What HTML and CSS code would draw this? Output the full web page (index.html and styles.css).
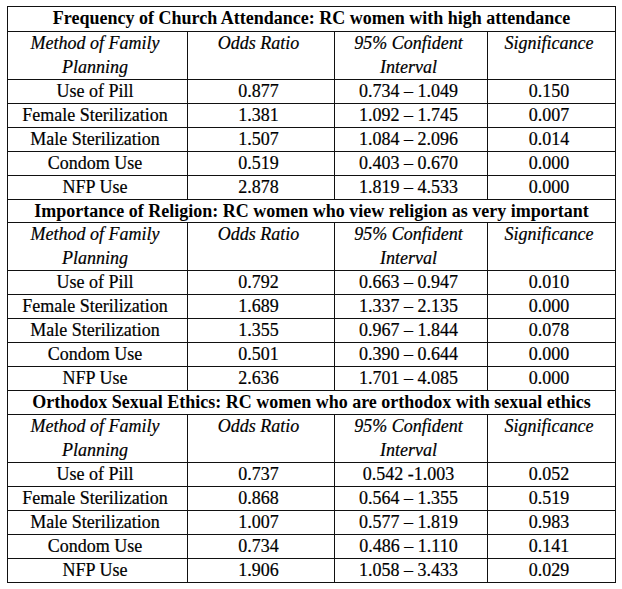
FILE: index.html
```html
<!DOCTYPE html>
<html>
<head>
<meta charset="utf-8">
<link rel="stylesheet" href="styles.css">
</head>
<body>
<div class="tbl">
  <div class="title">Frequency of Church Attendance: RC women with high attendance</div>
  <div class="hd"><span>Method of Family<br>Planning</span></div>
  <div class="hd"><span>Odds Ratio</span></div>
  <div class="hd"><span>95% Confident<br>Interval</span></div>
  <div class="hd"><span>Significance</span></div>
  <div>Use of Pill</div><div>0.877</div><div>0.734 – 1.049</div><div>0.150</div>
  <div>Female Sterilization</div><div>1.381</div><div>1.092 – 1.745</div><div>0.007</div>
  <div>Male Sterilization</div><div>1.507</div><div>1.084 – 2.096</div><div>0.014</div>
  <div>Condom Use</div><div>0.519</div><div>0.403 – 0.670</div><div>0.000</div>
  <div>NFP Use</div><div>2.878</div><div>1.819 – 4.533</div><div>0.000</div>

  <div class="title">Importance of Religion: RC women who view religion as very important</div>
  <div class="hd"><span>Method of Family<br>Planning</span></div>
  <div class="hd"><span>Odds Ratio</span></div>
  <div class="hd"><span>95% Confident<br>Interval</span></div>
  <div class="hd"><span>Significance</span></div>
  <div>Use of Pill</div><div>0.792</div><div>0.663 – 0.947</div><div>0.010</div>
  <div>Female Sterilization</div><div>1.689</div><div>1.337 – 2.135</div><div>0.000</div>
  <div>Male Sterilization</div><div>1.355</div><div>0.967 – 1.844</div><div>0.078</div>
  <div>Condom Use</div><div>0.501</div><div>0.390 – 0.644</div><div>0.000</div>
  <div>NFP Use</div><div>2.636</div><div>1.701 – 4.085</div><div>0.000</div>

  <div class="title">Orthodox Sexual Ethics: RC women who are orthodox with sexual ethics</div>
  <div class="hd"><span>Method of Family<br>Planning</span></div>
  <div class="hd"><span>Odds Ratio</span></div>
  <div class="hd"><span>95% Confident<br>Interval</span></div>
  <div class="hd"><span>Significance</span></div>
  <div>Use of Pill</div><div>0.737</div><div>0.542 -1.003</div><div>0.052</div>
  <div>Female Sterilization</div><div>0.868</div><div>0.564 – 1.355</div><div>0.519</div>
  <div>Male Sterilization</div><div>1.007</div><div>0.577 – 1.819</div><div>0.983</div>
  <div>Condom Use</div><div>0.734</div><div>0.486 – 1.110</div><div>0.141</div>
  <div>NFP Use</div><div>1.906</div><div>1.058 – 3.433</div><div>0.029</div>
</div>
</body>
</html>
```

FILE: styles.css
```css
html, body {
  background: #ffffff;
}
body {
  margin: 6px 0 0 7px;
  font-family: "Liberation Serif", "Times New Roman", serif;
  font-size: 18px;
  color: #000;
}
.tbl {
  display: grid;
  grid-template-columns: 180px 147px 153px 128px;
  grid-template-rows: 25px repeat(7, 24px) 23px repeat(15, 24px);
  width: 609px;
  box-sizing: border-box;
  border-left: 1px solid #111;
  border-top: 1px solid #111;
}
.tbl > div {
  box-sizing: border-box;
  border-right: 1px solid #111;
  border-bottom: 1px solid #111;
  padding-right: 5px;
  text-align: center;
  line-height: 23px;
  white-space: nowrap;
  -webkit-text-stroke: 0.2px #000;
}
.tbl > .title {
  grid-column: 1 / -1;
  padding-right: 0;
  font-weight: bold;
  line-height: 23px;
  -webkit-text-stroke: 0;
}
.tbl > .hd {
  grid-row: span 2;
  font-style: italic;
  line-height: 24px;
}
.hd > span {
  display: block;
  margin-top: -1px;
}
```
